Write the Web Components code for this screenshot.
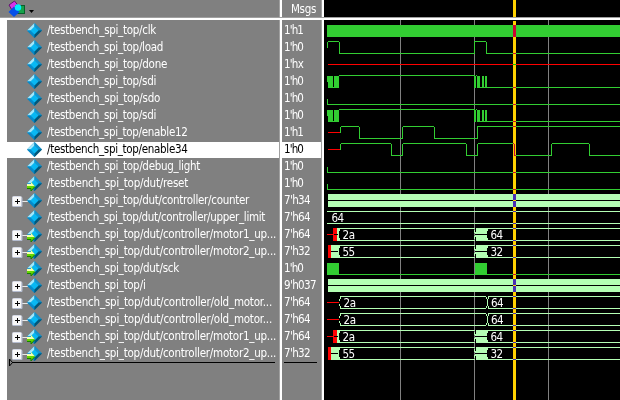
<!DOCTYPE html>
<html lang="en"><head><meta charset="utf-8"><title>Wave</title>
<style>html,body{margin:0;background:#fff;overflow:hidden}body{font:11.5px/17px "DejaVu Sans Condensed","DejaVu Sans",sans-serif;color:#fff}</style></head>
<body><wave-window></wave-window>
<script>
const G='#32cd32',L='#b4ffb4',R='#ff0000',K='#000';
const rect=(x,y,w,h,c=G)=>`<rect x="${x}" y="${y}" width="${w}" height="${h}" fill="${c}"/>`;
const H=(x,e,y,c)=>rect(x,y,e-x,1,c);
const text=(x,s)=>`<text x="${x}" y="12" fill="#fff" textLength="12.5">${s}</text>`;
// Two-level trace: each edge is an x coordinate; the level toggles there.
function logic(x,level,edges){let o='';for(const e of edges){o+=H(x+(level?1:0),e,level?1:13)+rect(e,2,1,12);x=e;level=!level}
 return o+H(x,620,level?1:13)}
const waves={
clk:()=>rect(327,2,293,12),
load:()=>rect(327,2,1,6)+H(328,339,1)+rect(339,2,1,12)+H(339,474,13)+rect(474,1,1,13)+H(474,486,1)+rect(486,2,1,12)+H(486,620,13),
done:()=>H(328,620,7,R),
sdi:()=>rect(327,2,1,6)+rect(328,2,5,12)+rect(333,13,1,1)+rect(334,2,5,12)+H(339,475,1)+rect(474,2,2,12)+rect(476,1,1,1)+rect(477,2,3,12)+rect(482,2,2,12)+rect(485,2,2,12)+H(479,620,13),
low:()=>rect(327,8,1,6)+H(327,620,13),
en12:()=>H(328,340,7,R)+rect(340,2,1,6)+logic(340,1,[359,402,434,477]),
en34:()=>H(328,340,7,R)+rect(340,2,1,6)+logic(340,1,[391,402,466,477,514,551,589]),
solid:()=>rect(328,1,292,6,L)+rect(328,8,292,6,L)+H(328,620,7,K),
limit:()=>H(327,620,1,L)+H(327,620,13,L)+text(331.5,'64'),
m1:()=>H(327,333,7,R)+rect(333,1,4,13,R)+rect(337,1,2,13,L)+burst('2a','64')+H(334,338,7,K),
m2:()=>rect(328,1,3,13,R)+rect(331,1,8,13,L)+burst('55','32')+H(331,338,7,K),
sck:()=>rect(327,2,12,12)+H(339,475,13)+rect(475,2,12,12)+H(487,620,13),
old:()=>H(327,339,7,R)+H(340,486,1,L)+H(340,486,13,L)+rect(340,2,1,2,L)+rect(339,4,1,2,L)+rect(339,9,1,2,L)+rect(340,11,1,2,L)
 +rect(486,2,1,2,L)+rect(487,4,1,7,L)+rect(486,11,1,2,L)+rect(488,2,1,2,L)+rect(488,11,1,2,L)+H(488,620,1,L)+H(488,620,13,L)+text(343.5,'2a')+text(491,'64')};
function burst(a,b){return rect(339,2,1,2,L)+rect(338,4,1,7,L)+rect(339,11,1,2,L)+H(338,475,1,L)+H(338,475,13,L)
 +rect(474,3,1,3,L)+rect(474,9,1,3,L)+rect(475,5,1,5,L)+rect(476,1,12,13,L)+rect(487,4,1,7,K)+H(475,487,7,K)+H(486,620,1,L)+H(486,620,13,L)+text(342.5,a)+text(490.5,b)}
const C='/testbench_spi_top/dut/controller/';const T='/testbench_spi_top/';
// name, name width, value, value width, wave, expandable, input port
const signals=[[T+'clk',109,"1'h1",19,'clk'],[T+'load',116,"1'h0",19,'load'],[T+'done',120,"1'hx",19,'done'],[T+'sdi',109,"1'h0",19,'sdi'],
[T+'sdo',113,"1'h0",19,'low'],[T+'sdi',109,"1'h0",19,'sdi'],[T+'enable12',140.5,"1'h1",19,'en12'],[T+'enable34',140.5,"1'h0",19,'en34'],
[T+'debug_light',153,"1'h0",19,'low'],[T+'dut/reset',141,"1'h0",19,'low',0,1],[C+'counter',202,"7'h34",26,'solid',1],[C+'upper_limit',218,"7'h64",26,'limit'],
[C+'motor1_up...',229,"7'h64",26,'m1',1,1],[C+'motor2_up...',229,"7'h32",26,'m2',1,1],[T+'dut/sck',132,"1'h0",19,'sck',0,1],[T+'i',98.5,"9'h037",32,'solid',1],
[C+'old_motor...',225,"7'h64",26,'old',1],[C+'old_motor...',225,"7'h64",26,'old',1],[C+'motor1_up...',229,"7'h64",26,'m1',1,1],[C+'motor2_up...',229,"7'h32",26,'m2',1,1]];

customElements.define('fit-text',class extends HTMLElement{connectedCallback(){
 const r=this.attachShadow({mode:'open'});
 r.innerHTML='<style>:host{display:block;white-space:nowrap;width:max-content}span{display:inline-block}</style><span></span>';
 const s=r.querySelector('span');s.textContent=this.getAttribute('text');
 const w=s.getBoundingClientRect().width;
 s.style.letterSpacing=(this.getAttribute('width')-w)/s.textContent.length+'px'}});

customElements.define('signal-icon',class extends HTMLElement{connectedCallback(){
 const exp=this.hasAttribute('expand'),inp=this.hasAttribute('input');
 this.attachShadow({mode:'open'}).innerHTML=`<style>:host{display:block;width:36px;height:17px}svg{display:block}</style>
<svg width="36" height="17" viewBox="7 0 36 17">${exp?`<path d="M22 8.5h6" stroke="#e8e8e8"/><rect x="12.5" y="3.5" width="9" height="10" rx="1" fill="#f8f8f8" stroke="#d4d8e4"/><path d="M13 13.5h9v-9" fill="none" stroke="#b4bccf"/><path d="M15 8.5h5M17.5 6v5" stroke="#000"/>`:''}
<path d="M34.5 0L42 7.5 34.5 15 27 7.5Z" fill="#0878b0"/><path d="M34.5 0V4L31 7.5H27Z" fill="#a4e8fb"/><path d="M34.5 0L42 7.5H38L34.5 4Z" fill="#1593cc"/><path d="M27 7.5H31L34.5 11V15Z" fill="#078bcb"/><path d="M42 7.5H38L34.5 11V15Z" fill="#035779"/><path d="M34.5 3.5L38.5 7.5 34.5 11.5 30.5 7.5Z" fill="#08b8f3"/>
${inp?'<path d="M27 8.5h4V6l4 4.5-4 4.5v-3h-4Z" fill="#66d800"/><path d="M27 8h4V6l3.5 4H27Z" fill="#f4ffb0"/><path d="M27 12.5h4V15l3.5-4" fill="none" stroke="#168000"/>':''}</svg>`}});

customElements.define('signal-name',class extends HTMLElement{connectedCallback(){
 const g=n=>this.getAttribute(n);
 this.attachShadow({mode:'open'}).innerHTML=`<style>:host{display:flex;height:17px;gap:4px}:host([selected]){background:linear-gradient(#fff 16px,transparent 16px);color:#000}fit-text{margin-top:-1px}</style>
<signal-icon ${g('expand')==='1'?'expand':''} ${g('input')==='1'?'input':''}></signal-icon><fit-text text="${g('text')}" width="${g('width')}"></fit-text>`}});

customElements.define('signal-value',class extends HTMLElement{connectedCallback(){
 this.attachShadow({mode:'open'}).innerHTML=`<style>:host{display:flex;height:17px;padding-left:2px}:host([selected]){background:linear-gradient(#fff 16px,transparent 16px);color:#000}fit-text{margin-top:-1px}</style><fit-text text="${this.getAttribute('text')}" width="${this.getAttribute('width')}"></fit-text>`}});

customElements.define('signal-wave',class extends HTMLElement{connectedCallback(){
 this.attachShadow({mode:'open'}).innerHTML=`<style>:host{display:block;height:17px}svg{display:block}text{font:11.5px "DejaVu Sans Condensed","DejaVu Sans",sans-serif}</style><svg width="296" height="17" viewBox="324 0 296 17" shape-rendering="crispEdges">${waves[this.getAttribute('kind')]()}</svg>`}});

customElements.define('wave-header',class extends HTMLElement{connectedCallback(){
 this.attachShadow({mode:'open'}).innerHTML=`<style>:host{display:grid;grid-template-columns:279px 3px 39px 3px 296px;grid-template-rows:17px;height:17px;border-bottom:1px solid #a0a0a0;box-shadow:0 2px #fff;margin-bottom:2px;background:#808080}
.d{background:linear-gradient(90deg,#a0a0a0 1px,#fff 1px)}.b{background:#000}fit-text{padding:1px 0 0 9px;line-height:16px}svg{display:block}</style>
<div><svg width="40" height="17"><path d="M9 5L14.5 1l4 5-6 5Z" fill="#d535e8" stroke="#500060" stroke-width=".8"/><rect x="15.5" y="5.5" width="9" height="8" fill="#16a34a" stroke="#08602c"/><path d="M14 6.5L19.5 12 14 17 8.5 12Z" fill="#0750e8"/><circle cx="18" cy="7.5" r="3.2" fill="#00f0ff"/><path d="M29 10h5l-2.5 3Z" fill="#000"/></svg></div><div class="d"></div><fit-text text="Msgs" width="25"></fit-text><div class="d"></div><div class="b"></div>`}});

customElements.define('wave-window',class extends HTMLElement{connectedCallback(){
 const at=i=>i===7?'selected':'';
 this.attachShadow({mode:'open'}).innerHTML=`<style>:host{display:block;position:relative;width:620px;height:400px;overflow:hidden;isolation:isolate}
.body{display:grid;grid-template-columns:7px 272px 3px 39px 3px 296px;height:380px}
.body>div{padding-top:3px}.g{background:#808080}.d{background:linear-gradient(90deg,#a0a0a0 1px,#fff 1px)}
.w{background:linear-gradient(#808080,#808080) 76px 0/1px 100% no-repeat,linear-gradient(#808080,#808080) 150px 0/1px 100% no-repeat,linear-gradient(#808080,#808080) 224px 0/1px 100% no-repeat,#000}
.end{display:block;margin-top:-5px}
.cursor{position:absolute;left:513px;width:3px;background:#ffd100;mix-blend-mode:difference}.top{top:0;height:17px}.bottom{top:21px;height:379px}</style>
<wave-header></wave-header><div class="body"><div></div>
<div class="g">${signals.map((s,i)=>`<signal-name ${at(i)} text="${s[0]}" width="${s[1]}" expand="${s[5]||0}" input="${s[6]||0}"></signal-name>`).join('')}<svg class="end" width="272" height="10"><path d="M2.5 1v7L5.5 4.5Z" fill="none" stroke="#000"/><path d="M5 4.5H268" stroke="#000"/></svg></div>
<div class="d"></div><div class="g">${signals.map((s,i)=>`<signal-value ${at(i)} text="${s[2]}" width="${s[3]}"></signal-value>`).join('')}<svg class="end" width="39" height="10"><path d="M2 4.5H35" stroke="#000"/></svg></div>
<div class="d"></div><div class="w">${signals.map(s=>`<signal-wave kind="${s[4]}"></signal-wave>`).join('')}</div></div>
<div class="cursor top"></div><div class="cursor bottom"></div>`}});
</script></body></html>
